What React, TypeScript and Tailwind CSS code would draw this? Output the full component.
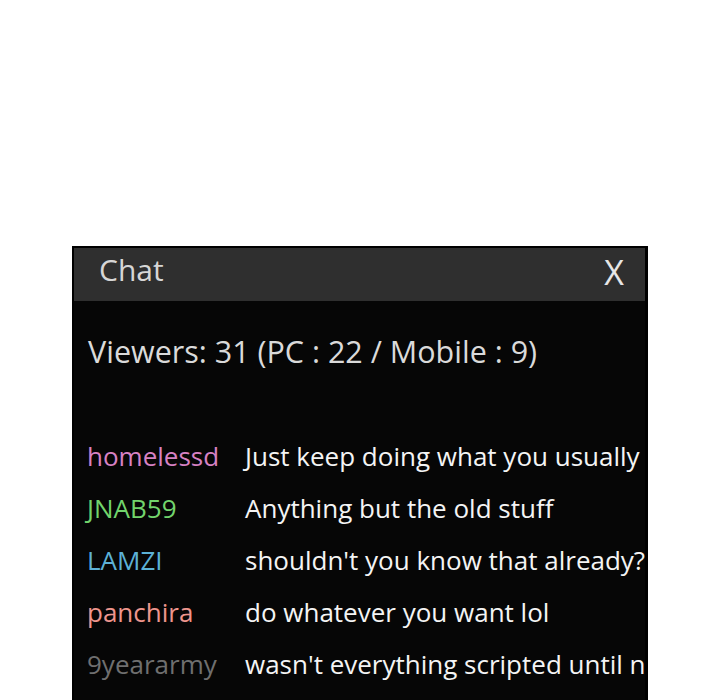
const messages = [
  { user: "homelessd", color: "text-[#d781c3]", text: "Just keep doing what you usually do" },
  { user: "JNAB59", color: "text-[#72d46c]", text: "Anything but the old stuff" },
  { user: "LAMZI", color: "text-[#5cb1d6]", text: "shouldn't you know that already?" },
  { user: "panchira", color: "text-[#ee958d]", text: "do whatever you want lol" },
  { user: "9yeararmy", color: "text-[#6f6f6f]", text: "wasn't everything scripted until now" },
];

export default function App() {
  return (
    <div
      className="w-[720px] h-[700px] bg-white overflow-hidden pt-[246px] pl-[72px]"
      style={{ fontFamily: '"Open Sans", "Noto Sans", sans-serif' }}
    >
      <div className="w-[576px] h-[454px] border-2 border-r-[3px] border-b-0 border-black bg-[#060606] overflow-hidden">
        <div className="h-[53px] bg-[#2f2f2f] flex items-center justify-between pl-[25px] pr-[21px] pb-[9px]">
          <span className="text-[30px] text-[#d6d6d6] leading-none">Chat</span>
          <span className="text-[34px] text-[#e6e6e6] leading-none mt-[4px]">X</span>
        </div>
        <div className="mt-[31px] pl-[14px] h-[40px] flex items-center text-[30.5px] text-[#dadada] whitespace-nowrap">
          Viewers: 31 (PC : 22 / Mobile : 9)
        </div>
        <div className="mt-[58px] flex flex-col">
          {messages.map((m) => (
            <div key={m.user} className="h-[52px] flex items-center text-[26px] whitespace-nowrap">
              <span className={`w-[171px] pl-[13px] shrink-0 ${m.color}`}>{m.user}</span>
              <span className="text-[#f4f4f4]">{m.text}</span>
            </div>
          ))}
        </div>
      </div>
    </div>
  );
}
